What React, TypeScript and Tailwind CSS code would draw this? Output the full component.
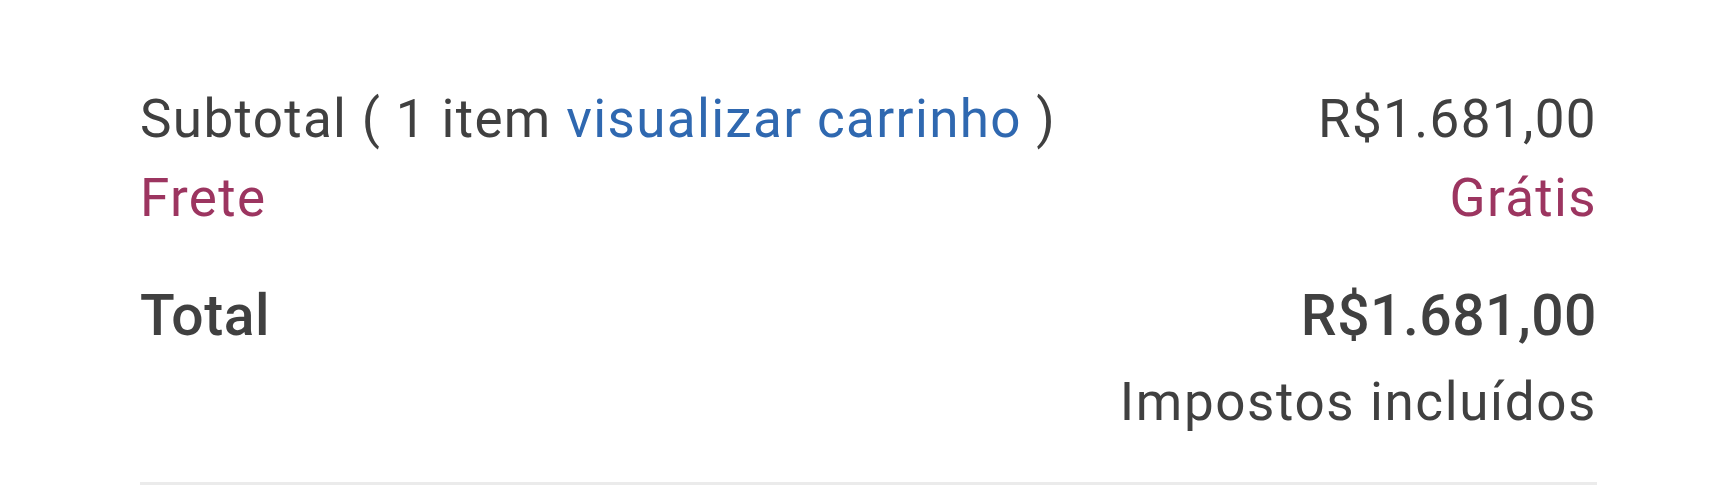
export default function App() {
  return (
    <main className="min-h-[500px] w-full bg-white font-['Roboto',sans-serif] text-[#404040]">
      <div className="ml-[140px] w-[1457px] pt-[80px]">
        <div className="flex items-start justify-between text-[53px] leading-[79px] tracking-[1.35px]">
          <div>
            <div>
              Subtotal ( 1 item <a href="#" className="text-[#2f68b0]">visualizar carrinho</a> )
            </div>
            <div className="text-[#9c3560]">Frete</div>
          </div>
          <div className="text-right">
            <div>R$1.681,00</div>
            <div className="text-[#9c3560]">Grátis</div>
          </div>
        </div>

        <div className="mt-[39px] flex items-start justify-between">
          <div className="text-[57px] leading-[77px] font-medium tracking-[0.5px]">Total</div>
          <div className="text-right">
            <div className="text-[57px] leading-[77px] font-medium tracking-[0.5px]">R$1.681,00</div>
            <div className="mt-[10px] text-[53px] leading-[77px] tracking-[1.6px]">Impostos incluídos</div>
          </div>
        </div>

        <div className="mt-[41px] h-[3px] bg-[#ebebeb]" />
      </div>
    </main>
  )
}
